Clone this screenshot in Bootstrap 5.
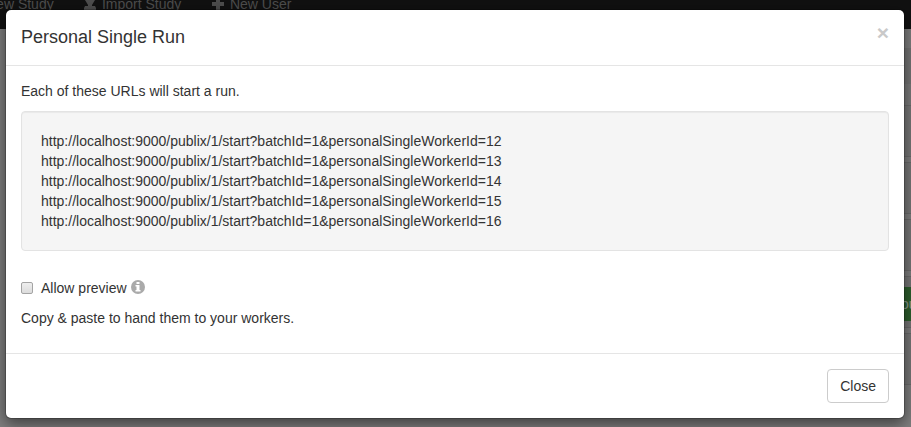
<!DOCTYPE html>
<html lang="en"><head><meta charset="utf-8"><title>Personal Single Run</title>
<link href="https://cdn.jsdelivr.net/npm/bootstrap@5.3.0/dist/css/bootstrap.min.css" rel="stylesheet">
<style>
body{font:14px/20px "Liberation Sans",Arial,sans-serif;color:#333;background:#7f7f7f;height:427px;overflow:hidden}
.topbar{height:29px;background:#111;color:#4e4e4e;padding:0}
.topbar a{color:inherit;text-decoration:none;line-height:20px;white-space:nowrap;margin-top:-6px;height:20px;display:block}
.topbar svg{margin-right:1px}
.nav-a{margin-left:-14px;width:97px}
.nav-b{width:128px}
.page-strip{width:8px;height:398px}
.strip-cell{background:#787878;border:1px solid #6c6c6c;border-width:1px 0;flex:none;height:52px;margin-bottom:5px}
.strip-top{height:19px}
.strip-first{height:57px;background:linear-gradient(#757575 0 36px,#7b7b7b 36px)}
.green-btn{background:#2e602e;color:#8f9b8f;height:34px;margin-top:10px;line-height:34px;overflow:hidden;text-indent:-2px}
.run-overlay{left:5px;top:9px;width:900px;height:410px}
.run-modal{border:1px solid rgba(0,0,0,.2);border-radius:6px;box-shadow:0 5px 15px rgba(0,0,0,.5);background:#fff;background-clip:padding-box;color:#333;height:410px}
.run-modal .modal-header{height:56px;padding:14px 15px 16px;border-bottom:1px solid #e5e5e5}
.run-modal .modal-title{font-size:18px;line-height:24px;font-weight:400}
.x-close{color:#c9c9c9;background:none;border:0;font:bold 21px/21px "Liberation Sans",Arial,sans-serif;padding:0;align-self:flex-start;margin-top:-2px}
.run-modal .modal-body{padding:15px;flex:none;height:287px}
.url-well{background:#f5f5f5;border:1px solid #e3e3e3;border-radius:4px;padding:19px;height:140px;margin:10px 0 27px;box-shadow:inset 0 1px 1px rgba(0,0,0,.05)}
.preview-row{margin-bottom:10px}
.preview-row svg{margin-top:-2px}
.preview-box{appearance:none;width:12px;height:12px;border:1px solid #a4a4a4;border-radius:2px;background:linear-gradient(#eee,#dcdcdc);margin:0 8px 0 0}
.run-modal .modal-footer{height:65px;padding:15px;border-top:1px solid #e5e5e5}
.close-btn{font-size:14px;line-height:20px;padding:6px 12px;border:1px solid #ccc;border-radius:4px;color:#333;background:#fff;margin:0}
</style></head><body>
<nav class="topbar d-flex">
<a class="nav-a" href="#">New Study</a>
<a class="nav-b" href="#"><svg width="14" height="14" viewBox="0 0 14 14" fill="currentColor" class="align-text-bottom"><path d="M5 0h4v2h3L9 7v1h3l1 2v3H1v-3l1-2h3V7L2 2h3z"/></svg> Import Study</a>
<a href="#"><svg width="14" height="14" viewBox="0 0 14 14" fill="currentColor" class="align-text-bottom"><path d="M5 0h4v4h4v4H9v4H5V8H1V4h4z"/></svg> New User</a>
</nav>
<div class="page-strip ms-auto d-flex flex-column">
<div class="strip-top flex-shrink-0"></div><div class="strip-first flex-shrink-0"></div>
<div class="strip-cell"></div><div class="strip-cell"></div><div class="strip-cell"></div>
<div class="strip-cell"><div class="green-btn">ou</div></div><div class="strip-cell"></div>
</div>
<div class="run-overlay position-absolute" role="dialog"><div class="modal-content run-modal">
<div class="modal-header"><h4 class="modal-title">Personal Single Run</h4><button class="x-close" aria-label="Dismiss">×</button></div>
<div class="modal-body"><div>Each of these URLs will start a run.</div>
<div class="url-well">http://localhost:9000/publix/1/start?batchId=1&amp;personalSingleWorkerId=12<br>http://localhost:9000/publix/1/start?batchId=1&amp;personalSingleWorkerId=13<br>http://localhost:9000/publix/1/start?batchId=1&amp;personalSingleWorkerId=14<br>http://localhost:9000/publix/1/start?batchId=1&amp;personalSingleWorkerId=15<br>http://localhost:9000/publix/1/start?batchId=1&amp;personalSingleWorkerId=16</div>
<label class="preview-row d-flex align-items-center"><input type="checkbox" class="preview-box">Allow preview<svg class="ms-1" width="14" height="14" viewBox="0 0 14 14"><circle cx="7" cy="7" r="7" fill="#aaa"/><path d="M5.500 2h3v2h-3zM4.500 5h4v5h1v1.500h-5V10h1V6.500h-1z" fill="#fff"/></svg></label>
<div>Copy &amp; paste to hand them to your workers.</div></div>
<div class="modal-footer"><button class="btn close-btn">Close</button></div>
</div></div>
<script src="https://cdn.jsdelivr.net/npm/bootstrap@5.3.0/dist/js/bootstrap.bundle.min.js"></script>
</body></html>
